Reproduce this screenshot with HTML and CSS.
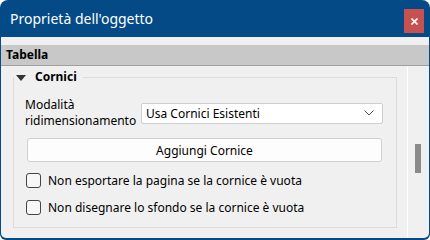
FILE: index.html
```html
<!DOCTYPE html>
<html lang="it">
<head>
    <meta charset="UTF-8">
    <meta name="viewport" content="width=device-width, initial-scale=1.0">
    <title>Proprietà dell'oggetto</title>
    <link rel="stylesheet" href="styles.css">
</head>
<body>
    <div class="window">
        <div class="titlebar">
            <span class="title">Proprietà dell'oggetto</span>
            <button class="close" title="Chiudi">
                <svg width="7" height="7" viewBox="0 0 7 7"><path d="M0.5 0.5 L6.5 6.5 M6.5 0.5 L0.5 6.5" stroke="#fff" stroke-width="1.6"/></svg>
            </button>
        </div>
        <div class="client">
            <div class="section-header">Tabella</div>
            <div class="panel">
                <div class="panel-main">
                    <fieldset class="group">
                        <legend class="group-title">
                            <span class="arrow"></span>
                            <span>Cornici</span>
                        </legend>
                        <div class="group-body">
                            <div class="form-row">
                                <label class="field-label" for="resize">Modalità<br>ridimensionamento</label>
                                <div class="combo" id="resize">
                                    <span>Usa Cornici Esistenti</span>
                                    <svg width="10" height="6" viewBox="0 0 10 6"><path d="M0.5 0.5 L5 5 L9.5 0.5" fill="none" stroke="#555" stroke-width="1"/></svg>
                                </div>
                            </div>
                            <button class="push">Aggiungi Cornice</button>
                            <label class="check-row"><span class="check"></span>Non esportare la pagina se la cornice è vuota</label>
                            <label class="check-row"><span class="check"></span>Non disegnare lo sfondo se la cornice è vuota</label>
                        </div>
                    </fieldset>
                </div>
                <div class="scrollbar">
                    <div class="thumb"></div>
                </div>
            </div>
        </div>
    </div>
</body>
</html>
```

FILE: styles.css
```css
body {
    margin: 0;
    background: #fff;
    font-family: "Noto Sans", "Open Sans", sans-serif;
    font-size: 12px;
    color: #000;
}
.window {
    width: 430px;
    height: 240px;
    box-sizing: border-box;
    background: #034a86;
    border-radius: 8px 8px 6px 6px;
    padding: 0 1px 2px 1px;
    display: flex;
    flex-direction: column;
}
.titlebar {
    height: 37px;
    display: flex;
    align-items: flex-start;
    color: #fff;
}
.title {
    font-size: 14px;
    line-height: 37px;
    padding-left: 9px;
}
.close {
    margin: 9px 5px 0 auto;
    width: 20px;
    height: 24px;
    border: none;
    padding: 0;
    background: #c75050;
    display: flex;
    align-items: center;
    justify-content: center;
}
.client {
    flex: 1;
    background: #f0f0f0;
    padding-top: 8px;
    border-radius: 0 0 5px 5px;
    display: flex;
    flex-direction: column;
}
.section-header {
    height: 20px;
    line-height: 20px;
    background: #c8c8c8;
    border-bottom: 1px solid #a0a0a0;
    font-weight: bold;
    padding-left: 5px;
}
.panel {
    flex: 1;
    display: flex;
}
.panel-main {
    flex: 1;
    display: flex;
    flex-direction: column;
    padding: 2px 10px 10px 12px;
}
.group {
    flex: 1;
    margin: 0;
    padding: 0;
    border: 1px solid #dcdcdc;
    min-width: 0;
}
.group-title {
    display: flex;
    align-items: center;
    padding: 0 6px 0 1px;
    font-weight: bold;
    line-height: 18px;
}
.arrow {
    width: 0;
    height: 0;
    border-left: 5px solid transparent;
    border-right: 5px solid transparent;
    border-top: 6px solid #333;
    margin: 1px 9px 0 1px;
}
.group-body {
    padding: 11px 13px 0 11px;
}
.form-row {
    display: flex;
    align-items: center;
}
.field-label {
    width: 116px;
    line-height: 16px;
}
.combo {
    flex: 1;
    height: 21px;
    box-sizing: border-box;
    background: #fff;
    border: 1px solid #cfcfcf;
    border-radius: 2px;
    display: flex;
    align-items: center;
    justify-content: space-between;
    padding: 0 8px 0 4px;
}
.push {
    display: block;
    width: calc(100% - 3px);
    height: 24px;
    margin: 9px 0 0 2px;
    background: #fdfdfd;
    border: 1px solid #d0d0d0;
    border-radius: 3px;
    font-family: inherit;
    font-size: 12px;
    color: #000;
}
.check-row {
    display: flex;
    align-items: center;
    height: 27px;
    gap: 7px;
    padding-left: 1px;
}
.check-row:first-of-type {
    margin-top: 5px;
}
.check {
    width: 15px;
    height: 15px;
    box-sizing: border-box;
    border: 1px solid #444;
    border-radius: 3px;
    background: #f7f7f7;
}
.scrollbar {
    width: 21px;
    border-left: 1px solid #fff;
}
.thumb {
    width: 6px;
    height: 29px;
    margin: 78px 0 0 7px;
    background: #8a8a8a;
}
```
